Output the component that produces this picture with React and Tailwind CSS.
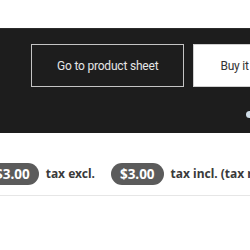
import React from "react";

function App() {
  return (
    <div className="w-[250px] h-[250px] overflow-hidden bg-white" style={{ fontFamily: "Roboto, sans-serif" }}>
      <div className="h-[28px]" />
      <div className="h-[105px] bg-[#1d1d1d] border-t border-[#2c2c2c] pt-[15px] relative">
        <div className="flex gap-[9px] pl-[31px] whitespace-nowrap">
          <button className="h-[43px] px-[25px] border border-[#c4c4c4] text-[#e6e6e6] text-[12px] tracking-[-0.2px] bg-transparent">
            Go to product sheet
          </button>
          <button className="h-[43px] px-[26px] border border-[#d0d0d0] bg-white text-[#333] text-[12px] tracking-[-0.2px]">
            Buy it now
          </button>
        </div>
        <div className="absolute left-[246px] top-[82px] w-[7px] h-[7px] rounded-full bg-[#cfdbe6]" />
      </div>
      <div
        className="flex items-center whitespace-nowrap mt-[30px] -ml-[14px] text-[12px] font-bold text-[#3a3a3a]"
        style={{ fontFamily: "'Noto Sans', sans-serif" }}
      >
        <span className="h-[22px] px-[9px] rounded-full bg-[#5b5b5b] text-white text-[13.5px] flex items-center">$3.00</span>
        <span className="ml-[7px]">tax excl.</span>
        <span className="ml-[16px] h-[22px] px-[9px] rounded-full bg-[#5b5b5b] text-white text-[13.5px] flex items-center">$3.00</span>
        <span className="ml-[7px]">tax incl. (tax rate 20%)</span>
      </div>
      <div className="mt-[10px] border-t border-[#e6e6e6]" />
    </div>
  );
}

export default App;
